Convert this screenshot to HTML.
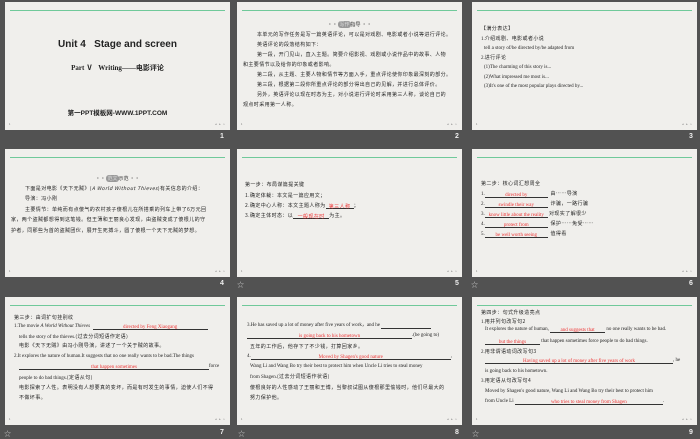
<!DOCTYPE html>
<html><head><meta charset="utf-8"><style>
*{margin:0;padding:0;box-sizing:border-box}
body{width:700px;height:438px;background:#525252;position:relative;overflow:hidden;font-family:"Liberation Serif","Noto Sans CJK SC",serif}
.s{position:absolute;width:225px;height:128px;background:#f0efec;overflow:hidden}
.s::before{content:"";position:absolute;left:5px;right:5px;top:8px;height:1px;background:#70c99a}
.pg{position:absolute;left:4px;bottom:4px;font-size:3px;color:#555}
.nav{position:absolute;right:4px;bottom:4px;font-size:3px;color:#888;letter-spacing:1px}
.n{position:absolute;color:#eee;font:bold 7px "Liberation Sans",sans-serif}
.st{position:absolute;color:#ccc;font-size:7px}
.t{position:absolute;font-size:5px;line-height:6px;color:#1e1e1e;white-space:nowrap;font-family:"Liberation Serif","Noto Sans CJK SC",serif}
.r{color:#e33}
.u{display:inline-block;border-bottom:0.6px solid #333;text-align:center;color:#e33;height:5px;line-height:5px;vertical-align:bottom}
.cj{font-family:"Noto Sans CJK SC",sans-serif;letter-spacing:0.4px}
.hd{position:absolute;left:0;right:0;text-align:center;font-size:5px;color:#333;font-family:"Noto Sans CJK SC",sans-serif}
.hd b{display:inline-block;background:#999;color:#ddd;border-radius:3px;padding:0 1px;font-weight:normal}
</style></head><body>

<!-- slide 1 -->
<div class="s" style="left:5px;top:2px">
<div class="t" style="left:0;right:0;top:37px;text-align:center;font:bold 10px 'Liberation Sans','Noto Sans CJK SC',sans-serif;line-height:11px;color:#222">Unit 4&nbsp;&nbsp;&nbsp;Stage and screen</div>
<div class="t" style="left:0;right:0;top:62px;text-align:center;font:bold 7px 'Liberation Serif','Noto Sans CJK SC',serif;line-height:8px;color:#222">Part Ⅴ&nbsp;&nbsp;&nbsp;Writing——电影评论</div>
<div class="t" style="left:0;right:0;top:108px;text-align:center;font:bold 6.5px 'Liberation Sans','Noto Sans CJK SC',sans-serif;line-height:7px;color:#222">第一PPT模板网-WWW.1PPT.COM</div>
<div class="pg">1</div><div class="nav">◂ ▸ ▹</div></div>
<div class="n" style="left:220px;top:133px">1</div>

<!-- slide 2 -->
<div class="s" style="left:237px;top:2px">
<div class="hd" style="top:19px">·· <b>写作</b>指导 ··</div>
<div class="t cj" style="left:20px;top:30px">本单元的写作任务是写一篇英语评论，可以是对戏剧、电影或者小说等进行评论。</div>
<div class="t cj" style="left:20px;top:40px">英语评论的段落结构如下：</div>
<div class="t cj" style="left:20px;top:50px">第一段，开门见山，直入主题。简要介绍影视、戏剧或小说作品中的故事、人物</div>
<div class="t cj" style="left:6px;top:60px">和主要情节以及给你的印象或者影响。</div>
<div class="t cj" style="left:20px;top:70px">第二段，从主题、主要人物和情节等方面入手，重点评论使你印象最深刻的部分。</div>
<div class="t cj" style="left:20px;top:80px">第三段，根据第二段你所重点评论的部分得出自己的见解，并进行总体评价。</div>
<div class="t cj" style="left:20px;top:90px">另外，英语评论以现在时态为主，对小说进行评论时采用第三人称，谈论自己的</div>
<div class="t cj" style="left:6px;top:100px">观点时采用第一人称。</div>
<div class="pg">1</div><div class="nav">◂ ▸ ▹</div></div>
<div class="n" style="left:455px;top:133px">2</div>

<!-- slide 3 -->
<div class="s" style="left:472px;top:2px">
<div class="t cj" style="left:9px;top:24px">【满分表达】</div>
<div class="t" style="left:9px;top:34px">1.<span class="cj">介绍戏剧、电影或者小说</span></div>
<div class="t" style="left:12px;top:44px">tell a story of/be directed by/be adapted from</div>
<div class="t" style="left:9px;top:53px">2.<span class="cj">进行评论</span></div>
<div class="t" style="left:12px;top:63px">(1)The charming of this story is...</div>
<div class="t" style="left:12px;top:73px">(2)What impressed me most is...</div>
<div class="t" style="left:12px;top:82px">(3)It's one of the most popular plays directed by...</div>
<div class="pg">1</div><div class="nav">◂ ▸ ▹</div></div>
<div class="n" style="left:689px;top:133px">3</div>

<!-- slide 4 -->
<div class="s" style="left:5px;top:149px">
<div class="hd" style="top:26px">·· <b>范文</b>示范 ··</div>
<div class="t cj" style="left:20px;top:37px">下面是对电影《天下无贼》(<i>A World Without Thieves</i>)有关信息的介绍：</div>
<div class="t cj" style="left:20px;top:47px">导演：冯小刚</div>
<div class="t cj" style="left:20px;top:58px">主要情节：单纯而有点傻气的农村孩子傻根儿在所搭乘的列车上带了6万元回</div>
<div class="t cj" style="left:6px;top:68px">家，两个盗贼都想得到这笔钱。但王薄和王丽良心发现，由盗贼变成了傻根儿的守</div>
<div class="t cj" style="left:6px;top:79px">护者，同那些为首的盗贼团伙，展开生死搏斗，圆了傻根一个天下无贼的梦想。</div>
<div class="pg">1</div><div class="nav">◂ ▸ ▹</div></div>
<div class="n" style="left:220px;top:280px">4</div>

<!-- slide 5 -->
<div class="s" style="left:237px;top:149px">
<div class="t cj" style="left:8px;top:33px">第一步：布局谋篇提关键</div>
<div class="t cj" style="left:8px;top:44px">1.确定体裁：本文是一篇应用文；</div>
<div class="t cj" style="left:8px;top:54px">2.确定中心人称：本文主题人称为<span class="u" style="width:28px">第三人称</span>；</div>
<div class="t cj" style="left:8px;top:64px">3.确定主体时态：以<span class="u" style="width:36px">一般现在时</span>为主。</div>
<div class="pg">1</div><div class="nav">◂ ▸ ▹</div></div>
<div class="n" style="left:455px;top:280px">5</div>
<div class="st" style="left:237px;top:280px">☆</div>
<div class="st" style="left:471px;top:280px">☆</div>

<!-- slide 6 -->
<div class="s" style="left:472px;top:149px">
<div class="t cj" style="left:9px;top:32px">第二步：核心词汇想周全</div>
<div class="t" style="left:9px;top:42px">1.<span class="u" style="width:63px">directed by</span> <span class="cj">&nbsp;由……导演</span></div>
<div class="t" style="left:9px;top:52px">2.<span class="u" style="width:63px">swindle their way</span> <span class="cj">&nbsp;诈骗，一路行骗</span></div>
<div class="t" style="left:9px;top:62px">3.<span class="u" style="width:63px">know little about the reality</span> <span class="cj">对现实了解很少</span></div>
<div class="t" style="left:9px;top:72px">4.<span class="u" style="width:63px">protect from</span> <span class="cj">&nbsp;保护……免受……</span></div>
<div class="t" style="left:9px;top:82px">5.<span class="u" style="width:63px">be well worth seeing</span> <span class="cj">&nbsp;值得看</span></div>
<div class="pg">1</div><div class="nav">◂ ▸ ▹</div></div>
<div class="n" style="left:689px;top:280px">6</div>

<!-- slide 7 -->
<div class="s" style="left:5px;top:297px">
<div class="t cj" style="left:9px;top:18px">第三步：由词扩句挂别纹</div>
<div class="t" style="left:9px;top:27px">1.The movie <i>A World Without Thieves</i> &nbsp;<span class="u" style="width:115px">directed by Feng Xiaogang</span></div>
<div class="t" style="left:14px;top:37px">tells the story of the thieves.<span class="cj">(过去分词短语作定语)</span></div>
<div class="t cj" style="left:14px;top:46px">电影《天下无贼》由冯小刚导演，讲述了一个关于贼的故事。</div>
<div class="t" style="left:9px;top:57px">2.It explores the nature of human.It suggests that no one really wants to be bad.The things</div>
<div class="t" style="left:14px;top:67px"><span class="u" style="width:190px">that happen sometimes</span>force</div>
<div class="t" style="left:14px;top:78px">people to do bad things.<span class="cj">(定语从句)</span></div>
<div class="t cj" style="left:14px;top:88px">电影探索了人性。表明没有人想要真的变坏，而是有时发生的事情，迫使人们不得</div>
<div class="t cj" style="left:14px;top:98px">不做坏事。</div>
<div class="pg">1</div><div class="nav">◂ ▸ ▹</div></div>
<div class="n" style="left:220px;top:429px">7</div>
<div class="st" style="left:4px;top:429px">☆</div>

<!-- slide 8 -->
<div class="s" style="left:237px;top:297px">
<div class="t" style="left:10px;top:26px">3.He has saved up a lot of money after five years of work，and he <span class="u" style="width:50px"></span></div>
<div class="t" style="left:10px;top:36px"><span class="u" style="width:165px">is going back to his hometown</span>.(be going to)</div>
<div class="t cj" style="left:13px;top:47px">五年的工作后，他存下了不少钱，打算回家乡。</div>
<div class="t" style="left:10px;top:57px">4.<span class="u" style="width:200px">Moved by Shagen's good nature</span>,</div>
<div class="t" style="left:13px;top:67px">Wang Li and Wang Bo try their best to protect him when Uncle Li tries to steal money</div>
<div class="t" style="left:13px;top:77px">from Shagen.<span class="cj">(过去分词短语作状语)</span></div>
<div class="t cj" style="left:13px;top:88px">傻根良好的人性感动了王丽和王博，当黎叔试图从傻根那里偷钱时，他们尽最大的</div>
<div class="t cj" style="left:13px;top:98px">努力保护他。</div>
<div class="pg">1</div><div class="nav">◂ ▸ ▹</div></div>
<div class="n" style="left:455px;top:429px">8</div>
<div class="st" style="left:238px;top:429px">☆</div>

<!-- slide 9 -->
<div class="s" style="left:472px;top:297px">
<div class="t cj" style="left:9px;top:13px">第四步：句式升级造亮点</div>
<div class="t" style="left:9px;top:22px">1.<span class="cj">用并列句改写句2</span></div>
<div class="t" style="left:13px;top:30px">It explores the nature of human, <span class="u" style="width:55px">and suggests that</span> no one really wants to be bad.</div>
<div class="t" style="left:13px;top:42px"><span class="u" style="width:55px">but the things</span> that happen sometimes force people to do bad things.</div>
<div class="t" style="left:9px;top:52px">2.<span class="cj">用非谓语动词改写句3</span></div>
<div class="t" style="left:13px;top:61px"><span class="u" style="width:188px">Having saved up a lot of money after five years of work</span>, he</div>
<div class="t" style="left:13px;top:72px">is going back to his hometown.</div>
<div class="t" style="left:9px;top:81px">3.<span class="cj">用定语从句改写句4</span></div>
<div class="t" style="left:13px;top:92px">Moved by Shagen's good nature, Wang Li and Wang Bo try their best to protect him</div>
<div class="t" style="left:13px;top:102px">from Uncle Li <span class="u" style="width:148px">who tries to steal money from Shagen</span>.</div>
<div class="pg">1</div><div class="nav">◂ ▸ ▹</div></div>
<div class="n" style="left:689px;top:429px">9</div>
<div class="st" style="left:472px;top:429px">☆</div>

</body></html>
